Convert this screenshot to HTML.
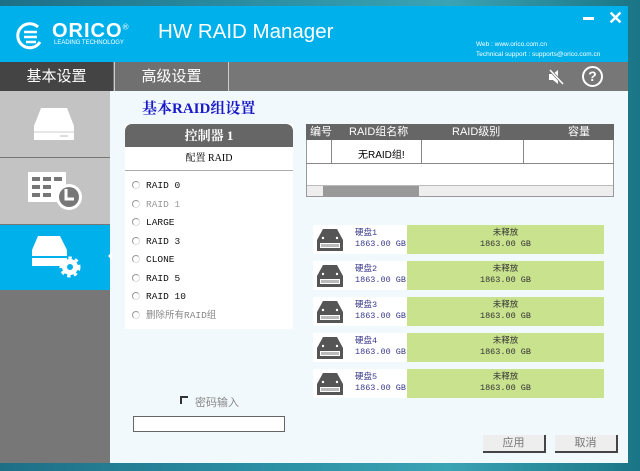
<!DOCTYPE html>
<html><head><meta charset="utf-8"><style>
*{margin:0;padding:0;box-sizing:border-box}
body{width:640px;height:471px;overflow:hidden;background:linear-gradient(90deg,#1d6f86,#2b8ea3 40%,#3aa3b4 70%,#1a7585);font-family:"Liberation Sans","Noto Sans CJK SC",sans-serif;position:relative}
.a{position:absolute}
.cjk{font-family:"Liberation Serif","Noto Serif CJK SC",serif}
.mono{font-family:"Liberation Mono","Noto Sans CJK SC",monospace}
.r{display:inline-block;width:8px;height:8px;border-radius:50%;border:1px solid #999;border-right-color:#ddd;border-bottom-color:#ddd;margin-right:6px;vertical-align:-1px}
</style></head><body>
<div class="a" style="left:0;top:6px;width:628px;height:457px;background:#f2f9fc"></div>
<div class="a" style="left:0;top:6px;width:628px;height:56px;background:#00b0ea"></div>
<svg class="a" style="left:14px;top:20px" width="32" height="32" viewBox="0 0 32 32"><path d="M24 7 A12 12 0 1 0 26 22" stroke="#fff" stroke-width="3" fill="none"/><path d="M10 12h13M10 17h13M12 22h10" stroke="#fff" stroke-width="2.5"/></svg>
<div class="a" style="left:52px;top:20px;color:#fff;font-size:20px;font-weight:bold;letter-spacing:1px">ORICO<sup style="font-size:8px;font-weight:normal">®</sup></div>
<div class="a" style="left:54px;top:40px;color:#fff;font-size:6px">LEADING TECHNOLOGY</div>
<div class="a" style="left:158px;top:20px;color:#fff;font-size:20.5px">HW RAID Manager</div>
<div class="a" style="left:476px;top:40px;color:#fff;font-size:6.5px;line-height:10px">Web : www.orico.com.cn<br>Technical support : supports@orico.com.cn</div>
<div class="a" style="left:583px;top:17px;width:11px;height:3px;background:#fff"></div>
<div class="a" style="left:608px;top:8px;color:#fff;font-size:18px;font-weight:bold">✕</div>
<div class="a" style="left:0;top:62px;width:628px;height:29px;background:#777"></div>
<div class="a" style="left:0;top:62px;width:113px;height:29px;background:#444;color:#fff;font-size:15px;text-align:center;line-height:29px">基本设置</div>
<div class="a" style="left:114px;top:62px;width:115px;height:29px;background:#707070;color:#fff;font-size:15px;text-align:center;line-height:29px;border-left:1px solid #ccc;border-right:1px solid #ccc">高级设置</div>
<svg class="a" style="left:546px;top:67px" width="20" height="20"><path d="M3 7h4l5-4v14l-5-4H3z" fill="#fff"/><path d="M4 3l13 14" stroke="#777" stroke-width="3"/><path d="M4 3l13 14" stroke="#fff" stroke-width="1.5"/></svg>
<div class="a" style="left:582px;top:66px;width:21px;height:21px;border:2px solid #fff;border-radius:50%;color:#fff;font-size:14px;font-weight:bold;text-align:center;line-height:17px">?</div>
<div class="a" style="left:0;top:91px;width:110px;height:372px;background:#777"></div>
<div class="a" style="left:0;top:91px;width:110px;height:66px;background:#c3c3c3"></div>
<div class="a" style="left:0;top:158px;width:110px;height:66px;background:#c3c3c3"></div>
<div class="a" style="left:0;top:225px;width:110px;height:65px;background:#00b0ea"></div>
<svg class="a" style="left:32px;top:108px" width="44" height="32"><path d="M9 0h26l7 18v14H2V18z" fill="#fff"/><line x1="2" y1="24" x2="42" y2="24" stroke="#ccc"/><line x1="28" y1="28" x2="36" y2="28" stroke="#bbb"/></svg>
<svg class="a" style="left:28px;top:172px" width="54" height="40"><rect x="0" y="0" width="38" height="30" fill="#fff"/><g fill="#777"><rect x="4" y="5" width="8" height="4"/><rect x="15" y="5" width="8" height="4"/><rect x="26" y="5" width="8" height="4"/><rect x="4" y="13" width="8" height="4"/><rect x="15" y="13" width="8" height="4"/><rect x="4" y="21" width="8" height="4"/><rect x="15" y="21" width="8" height="4"/></g><circle cx="41" cy="25" r="13" fill="#fff"/><circle cx="41" cy="25" r="10" fill="#777"/><path d="M38 17v10h8" stroke="#fff" stroke-width="3" fill="none"/></svg>
<svg class="a" style="left:30px;top:236px" width="52" height="42"><path d="M8 0h22l7 14v16H2V14z" fill="#fff"/><line x1="2" y1="21" x2="37" y2="21" stroke="#00b0ea" stroke-width="2"/><circle cx="40" cy="31" r="8" fill="#fff" stroke="#fff" stroke-width="5" stroke-dasharray="3 3"/><circle cx="40" cy="31" r="3" fill="#00b0ea"/></svg>
<div class="a" style="left:104px;top:252px;width:0;height:0;border:4px solid transparent;border-right-color:#fff"></div>
<div class="a cjk" style="left:142px;top:97px;color:#1a1ac8;font-size:15px;font-weight:bold">基本RAID组设置</div>
<div class="a" style="left:125px;top:124px;width:168px;height:205px;background:#fff"></div>
<div class="a cjk" style="left:125px;top:124px;width:168px;height:23px;background:#666;border-radius:7px 7px 0 0;color:#fff;font-size:13px;font-weight:bold;text-align:center;line-height:23px">控制器 1</div>
<div class="a cjk" style="left:125px;top:147px;width:168px;height:24px;border-bottom:1px solid #aaa;font-size:10px;text-align:center;line-height:24px">配置 RAID</div>
<div class="a mono" style="left:132px;top:177px;font-size:9.5px;line-height:18.5px;color:#111">
<div><span class="r"></span>RAID 0</div>
<div style="color:#999"><span class="r"></span>RAID 1</div>
<div><span class="r"></span>LARGE</div>
<div><span class="r"></span>RAID 3</div>
<div><span class="r"></span>CLONE</div>
<div><span class="r"></span>RAID 5</div>
<div><span class="r"></span>RAID 10</div>
<div style="color:#888"><span class="r"></span>删除所有RAID组</div>
</div>
<div class="a" style="left:180px;top:396px;width:8px;height:8px;border-left:2px solid #333;border-top:2px solid #333"></div>
<div class="a" style="left:195px;top:394px;font-size:11px;color:#888">密码输入</div>
<div class="a" style="left:133px;top:416px;width:152px;height:16px;border:1px solid #666;background:#fff"></div>
<div class="a" style="left:306px;top:124px;width:308px;height:73px;background:#fff;border:1px solid #999"></div>
<div class="a" style="left:306px;top:124px;width:308px;height:16px;background:#666;color:#fff;font-size:11px;line-height:16px">
<span class="a" style="left:4px">编号</span><span class="a" style="left:43px">RAID组名称</span><span class="a" style="left:146px">RAID级别</span><span class="a" style="left:262px">容量</span></div>
<div class="a" style="left:306px;top:140px;width:308px;height:24px;border-bottom:1px solid #888"></div>
<div class="a" style="left:331px;top:140px;width:1px;height:23px;background:#888"></div>
<div class="a" style="left:421px;top:140px;width:1px;height:23px;background:#888"></div>
<div class="a" style="left:523px;top:140px;width:1px;height:23px;background:#888"></div>
<div class="a" style="left:358px;top:146px;font-size:10px">无RAID组!</div>
<div class="a" style="left:307px;top:185px;width:306px;height:11px;background:#eee;border-top:1px solid #bbb"></div>
<div class="a" style="left:323px;top:186px;width:96px;height:10px;background:#999"></div>
<div class="a" style="left:313px;top:225px;width:292px;height:180px">
<div class="a" style="left:0;top:0;width:94px;height:29px;background:#fff"></div><div class="a" style="left:94px;top:0;width:197px;height:29px;background:#c9e28e"></div>
<div class="a" style="left:0;top:36px;width:94px;height:29px;background:#fff"></div><div class="a" style="left:94px;top:36px;width:197px;height:29px;background:#c9e28e"></div>
<div class="a" style="left:0;top:72px;width:94px;height:29px;background:#fff"></div><div class="a" style="left:94px;top:72px;width:197px;height:29px;background:#c9e28e"></div>
<div class="a" style="left:0;top:108px;width:94px;height:29px;background:#fff"></div><div class="a" style="left:94px;top:108px;width:197px;height:29px;background:#c9e28e"></div>
<div class="a" style="left:0;top:144px;width:94px;height:29px;background:#fff"></div><div class="a" style="left:94px;top:144px;width:197px;height:29px;background:#c9e28e"></div>
</div>
<svg class="a" style="left:316px;top:229px" width="30" height="170"><defs><g id="h"><path d="M7 0h14l6 11v11H1V11z" fill="#555"/><rect x="4" y="14" width="20" height="5" fill="#fff"/><path d="M6 15v3M8 15v3M10 15v3M12 15v3M14 15v3M16 15v3M18 15v3M20 15v3M22 15v3" stroke="#555" stroke-width=".8"/><circle cx="7" cy="9" r="1.2" fill="#fff"/><circle cx="21" cy="9" r="1.2" fill="#fff"/></g></defs><use href="#h" y="0"/><use href="#h" y="36"/><use href="#h" y="72"/><use href="#h" y="108"/><use href="#h" y="144"/></svg>
<div class="a mono" style="left:355px;top:228px;font-size:8.5px;line-height:11px;color:#3a3a8c">
<div style="height:36px">硬盘1<br>1863.00 GB</div><div style="height:36px">硬盘2<br>1863.00 GB</div><div style="height:36px">硬盘3<br>1863.00 GB</div><div style="height:36px">硬盘4<br>1863.00 GB</div><div style="height:36px">硬盘5<br>1863.00 GB</div></div>
<div class="a mono" style="left:407px;top:228px;width:197px;font-size:8.5px;line-height:11px;color:#333;text-align:center">
<div style="height:36px">未释放<br>1863.00 GB</div><div style="height:36px">未释放<br>1863.00 GB</div><div style="height:36px">未释放<br>1863.00 GB</div><div style="height:36px">未释放<br>1863.00 GB</div><div style="height:36px">未释放<br>1863.00 GB</div></div>
<div class="a" style="left:483px;top:435px;width:63px;height:18px;background:#eee;border-right:2px solid #444;border-bottom:2px solid #444;font-size:11px;color:#777;text-align:center;line-height:16px">应用</div>
<div class="a" style="left:555px;top:435px;width:63px;height:18px;background:#eee;border-right:2px solid #444;border-bottom:2px solid #444;font-size:11px;color:#777;text-align:center;line-height:16px">取消</div>
</body></html>
